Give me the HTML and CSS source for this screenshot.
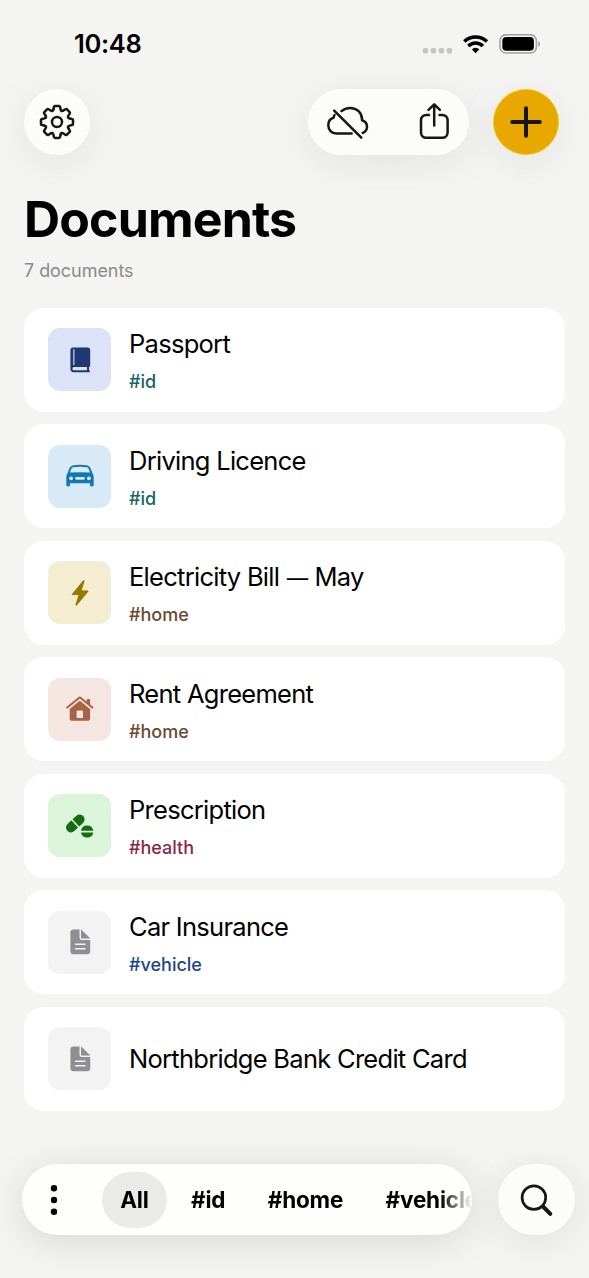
FILE: index.html
```html
<!DOCTYPE html>
<html lang="en">
<head>
<meta charset="utf-8">
<title>Documents</title>
<link rel="stylesheet" href="styles.css">
</head>
<body>
<div class="screen">
  <header class="status">
    <span class="time">10:48</span>
    <svg class="status-icons" width="120" height="24" viewBox="0 0 120 24">
      <g fill="#c4c4c3"><rect x="2.700" y="14" width="5.400" height="5.400" rx="1.700"/><rect x="10.700" y="14" width="5.400" height="5.400" rx="1.700"/><rect x="18.700" y="14" width="5.400" height="5.400" rx="1.700"/><rect x="26.700" y="14" width="5.400" height="5.400" rx="1.700"/></g>
      <g fill="none" stroke="#000" stroke-width="3.500"><path d="M44.300 7.500a16.200 16.200 0 0 1 22.600 0"/><path d="M48.300 12.100a10.300 10.300 0 0 1 14.600 0"/></g>
      <path d="M51.900 15.300a5.300 5.300 0 0 1 7.400 0L55.600 19.200z"/>
      <rect x="80" y="0.700" width="36.400" height="18.400" rx="6" fill="none" stroke="#a1a1a0" stroke-width="1.500"/>
      <rect x="82.300" y="3" width="31.600" height="13.800" rx="4"/>
      <path d="M118.200 7.400c2.900 1 2.900 4.300 0 5.300z" fill="#a1a1a0"/>
    </svg>
  </header>

  <nav class="toolbar">
    <button class="glass round" aria-label="Settings">
      <svg width="36" height="36" viewBox="-18 -18 36 36" fill="none" stroke="#161616" stroke-width="2.500" stroke-linecap="round">
        <defs><path id="tooth" d="M-3.600-12.600L-3.100-14.900Q-2.900-16-1.900-16H1.900Q2.900-16 3.100-14.900L3.600-12.600Q4.160-10 6.360-11.460"/></defs>
        <use href="#tooth"/><use href="#tooth" transform="rotate(45)"/><use href="#tooth" transform="rotate(90)"/><use href="#tooth" transform="rotate(135)"/><use href="#tooth" transform="rotate(180)"/><use href="#tooth" transform="rotate(225)"/><use href="#tooth" transform="rotate(270)"/><use href="#tooth" transform="rotate(315)"/>
        <circle r="5"/>
      </svg>
    </button>
    <div class="glass pair">
      <svg width="44" height="40" viewBox="325 102 44 40" fill="none" stroke="#161616" stroke-width="2.500" stroke-linecap="round" stroke-linejoin="round">
        <path d="M334.500 115.100C333.900 116 333.700 116.700 333.600 117.700C330.500 118.500 328.300 121.500 328.300 125.300C328.300 130 331.600 133.600 336.200 133.600H351.700"/>
        <path d="M341.500 111.100C344 108.900 346.400 107.900 350.100 107.900C356.900 107.900 362 112.900 362 119.200V120.300C365.200 121.300 367 123.700 367 126.800C367 129.600 365.300 132 362.700 132.900"/>
        <path d="M334.200 110.600L361.300 137.700"/>
      </svg>
      <svg width="32" height="40" viewBox="418 102 32 40" fill="none" stroke="#161616" stroke-width="2.500" stroke-linecap="round" stroke-linejoin="round">
        <path d="M429 114.900H426.200A5.200 5.200 0 0 0 421 120.100V132.600A5.200 5.200 0 0 0 426.200 137.800H442.400A5.200 5.200 0 0 0 447.600 132.600V120.100A5.200 5.200 0 0 0 442.400 114.900H439.500"/>
        <path d="M434.200 125.500V104.500M428.500 109.900L434.200 104.300L439.900 109.900"/>
      </svg>
    </div>
    <button class="round add" aria-label="Add document">
      <svg width="34" height="34" viewBox="0 0 34 34"><path d="M17 3.200V30.800M3.200 17H30.800" stroke="#161616" stroke-width="4" stroke-linecap="round"/></svg>
    </button>
  </nav>

  <main class="content">
    <h1 class="heading">Documents</h1>
    <p class="count">7 documents</p>
    <ul class="list">
      <li class="card">
        <span class="tile tile-passport"><svg width="30" height="30" viewBox="0 0 30 30">
          <path fill="#1d3872" d="M8.300 2.500H22.400A2.800 2.800 0 0 1 25.200 5.300V20.600Q25.200 21.900 24 22.300V25.300A1 1 0 0 1 24 27.300H8.900A3.500 3.500 0 0 1 5.400 23.800V5.300A2.800 2.800 0 0 1 8.300 2.500z"/>
          <path fill="#dde3f6" d="M8.300 4.200H9.400V19.900H8.300zM9 22.100H22V25.200H9A1.550 1.550 0 0 1 9 22.100z"/>
        </svg></span>
        <div class="info"><span class="name">Passport</span><span class="tag tag-id">#id</span></div>
      </li>
      <li class="card">
        <span class="tile tile-car"><svg width="30" height="30" viewBox="0 0 30 30">
          <path fill="#1377b6" fill-rule="evenodd" d="M8.500 4.200Q15 3.300 21.500 4.200Q24.600 4.500 25.700 7.400L27.400 12.100Q28.700 13.700 28.700 16.500V24Q28.700 25.600 26.900 25.600Q25 25.600 25 24V22.200H5V24Q5 25.600 3.100 25.600Q1.300 25.600 1.300 24V16.500Q1.300 13.700 2.600 12.100L4.300 7.400Q5.400 4.500 8.500 4.200zM8.300 6.200Q7 6.300 6.500 7.500L4.900 11.600Q15 10.800 25.100 11.600L23.500 7.500Q23 6.300 21.700 6.200Q15 5.500 8.300 6.200z"/>
          <g fill="#d8eaf6"><circle cx="6.100" cy="17.300" r="1.900"/><circle cx="23.900" cy="17.300" r="1.900"/><rect x="10.100" y="15.900" width="9.800" height="2.900" rx="1.450"/></g>
        </svg></span>
        <div class="info"><span class="name">Driving Licence</span><span class="tag tag-id">#id</span></div>
      </li>
      <li class="card">
        <span class="tile tile-bolt"><svg width="30" height="30" viewBox="0 0 30 30">
          <path fill="#967900" stroke="#967900" stroke-width="1" stroke-linejoin="round" d="M18.500 2.600L7.100 16.600H14.100L10.900 26.900Q11 27.500 11.700 27L22.900 13.400Q23.100 12.900 22.400 12.900H16.100L19.100 3Q19.100 2.300 18.500 2.600z"/>
        </svg></span>
        <div class="info"><span class="name">Electricity Bill <span class="dash">—</span> May</span><span class="tag tag-home">#home</span></div>
      </li>
      <li class="card">
        <span class="tile tile-house"><svg width="30" height="30" viewBox="0 0 30 30">
          <path fill="#a96246" fill-rule="evenodd" d="M4.700 13L14.800 5.500L25.100 13V24.200Q25.100 26.800 22.500 26.800H7.300Q4.700 26.800 4.700 24.200zM11.600 17.200V24H18V17.200Q18 16.500 17.300 16.500H12.300Q11.600 16.500 11.600 17.200z"/>
          <path fill="none" stroke="#f5e6e1" stroke-width="4.600" d="M1 14.900L14.800 3.700L28.600 14.900"/>
          <path fill="none" stroke="#a96246" stroke-width="2" stroke-linecap="round" stroke-linejoin="round" d="M2.200 13.500L13.900 3.900Q14.800 3.200 15.700 3.900L27.400 13.500"/>
          <path fill="#a96246" d="M21.700 5.800Q21.700 5 22.500 5H24.300Q25.100 5 25.100 5.800V11.200L21.700 8.600z"/>
        </svg></span>
        <div class="info"><span class="name">Rent Agreement</span><span class="tag tag-home">#home</span></div>
      </li>
      <li class="card">
        <span class="tile tile-pills"><svg width="30" height="30" viewBox="0 0 30 30">
          <g transform="translate(10.300 12.400) rotate(-43)" fill="#176b12"><path d="M-.8-4.900V4.900H-6A4.900 4.900 0 0 1-6-4.900zM.8-4.900V4.900H6A4.900 4.900 0 0 0 6-4.900z"/></g>
          <path fill="#176b12" d="M16 19.700A6.250 6.250 0 0 1 28.300 19.700zM16 21.400H28.300A6.250 6.250 0 0 1 16 21.400z"/>
        </svg></span>
        <div class="info"><span class="name">Prescription</span><span class="tag tag-health">#health</span></div>
      </li>
      <li class="card">
        <span class="tile tile-file"><svg width="30" height="30" viewBox="0 0 30 30">
          <path id="page" fill="#8e8e93" d="M8.500 2.500H14.500V10.800Q14.500 13 16.700 13H25.200V24.200A3 3 0 0 1 22.200 27.200H8.400A3 3 0 0 1 5.400 24.200V5.500A3 3 0 0 1 8.500 2.500zM16 2.600Q16.600 2.800 17.200 3.400L24.400 10.500Q25 11.100 25.100 11.600H17Q16 11.600 16 10.600z"/>
          <path stroke="#f3f3f4" stroke-width="1.500" stroke-linecap="round" d="M10.600 17.200H20M10.600 21.700H20"/>
        </svg></span>
        <div class="info"><span class="name">Car Insurance</span><span class="tag tag-vehicle">#vehicle</span></div>
      </li>
      <li class="card">
        <span class="tile tile-file"><svg width="30" height="30" viewBox="0 0 30 30">
          <use href="#page"/>
          <path stroke="#f3f3f4" stroke-width="1.500" stroke-linecap="round" d="M10.600 17.200H20M10.600 21.700H20"/>
        </svg></span>
        <div class="info"><span class="name">Northbridge Bank Credit Card</span></div>
      </li>
    </ul>
  </main>

  <footer class="bottom">
    <div class="filters">
      <svg class="dots" width="8" height="32" viewBox="0 0 8 32"><circle cx="4" cy="4.200" r="3.200"/><circle cx="4" cy="16" r="3.200"/><circle cx="4" cy="27.800" r="3.200"/></svg>
      <div class="chips">
        <span class="chip chip-active">All</span>
        <span class="chip">#id</span>
        <span class="chip">#home</span>
        <span class="chip">#vehicle</span>
      </div>
    </div>
    <button class="search" aria-label="Search">
      <svg width="36" height="36" viewBox="0 0 36 36" fill="none" stroke="#161616" stroke-linecap="round"><circle cx="14.900" cy="15.600" r="11.800" stroke-width="2.700"/><path d="M24 24.500L31.300 31.800" stroke-width="4"/></svg>
    </button>
  </footer>
</div>
</body>
</html>
```
FILE: styles.css
```css
* { box-sizing: border-box; }

body {
  margin: 0;
  background: #f4f4f2;
  color: #000;
  font-family: Inter, "Liberation Sans", sans-serif;
}

button { border: 0; padding: 0; font: inherit; }
svg { display: block; flex: none; }

.screen {
  width: 589px;
  height: 1278px;
  overflow: hidden;
  display: flex;
  flex-direction: column;
}

.status {
  height: 88.500px;
  flex: none;
  padding: 29px 49px 0 74px;
  display: flex;
  justify-content: space-between;
}
.time {
  font-size: 25.500px;
  font-weight: 600;
  line-height: 30px;
  letter-spacing: -0.300px;
}
.status-icons { margin-top: 5px; }

.toolbar {
  display: flex;
  align-items: center;
  padding: 0 30px 0 24px;
  height: 66px;
  flex: none;
}
.glass {
  background: #fcfcfa;
  box-shadow: 0 8px 44px rgba(0, 0, 0, 0.075);
}
.round {
  width: 66px;
  height: 66px;
  border-radius: 50%;
  display: grid;
  place-items: center;
}
.pair {
  width: 161.500px;
  height: 66px;
  border-radius: 33px;
  margin: 0 24px 0 auto;
  padding: 0 19.500px 0 17.500px;
  display: flex;
  align-items: center;
  justify-content: space-between;
}
.add {
  background: #e9a800;
  border: 1.500px solid #efcb08;
  box-shadow: 0 8px 44px rgba(0, 0, 0, 0.075);
}

.content { padding: 34.500px 24px 0; }
.heading {
  margin: 0;
  font-size: 50px;
  font-weight: 700;
  line-height: 60px;
  letter-spacing: -0.850px;
}
.count {
  margin: 10px 0 0;
  font-size: 18px;
  line-height: 24px;
  letter-spacing: -0.050px;
  color: #8a8a8c;
}

.list {
  list-style: none;
  margin: 24.500px 0 0;
  padding: 0;
  display: grid;
  gap: 12.500px;
}
.card {
  height: 104px;
  border-radius: 20px;
  background: #fff;
  padding: 0.800px 0 0 24px;
  display: flex;
  align-items: center;
  gap: 18px;
}
.tile {
  width: 63px;
  height: 63px;
  border-radius: 12px;
  display: grid;
  place-items: center;
}
.tile-passport { background: #dde3f6; }
.tile-car { background: #d8eaf6; }
.tile-bolt { background: #f5edd1; }
.tile-house { background: #f5e6e1; }
.tile-pills { background: #daf5d9; }
.tile-file { background: #f3f3f4; }

.info { display: flex; flex-direction: column; }
.info:has(.tag) { padding-top: 1.400px; }
.name {
  font-size: 25.500px;
  line-height: 42px;
  letter-spacing: -0.720px;
}
.dash {
  font-size: 21.500px;
  line-height: 1;
  margin: 0 0.500px 0 1px;
}
.tag {
  font-size: 18px;
  font-weight: 500;
  line-height: 33px;
}
.tag-id { color: #14656a; }
.tag-home { color: #6b4a2e; }
.tag-health { color: #8b2749; }
.tag-vehicle { color: #1c4788; }

.bottom {
  margin-top: auto;
  height: 114px;
  flex: none;
  padding: 0 14px 43px 22px;
  display: flex;
  justify-content: space-between;
}
.filters {
  width: 450px;
  height: 71px;
  border-radius: 36px;
  overflow: hidden;
  display: flex;
  align-items: center;
  padding-left: 28px;
  gap: 44px;
  background: #fefefc;
  box-shadow: 0 6px 40px rgba(0, 0, 0, 0.120);
}
.chips {
  flex: 1;
  min-width: 0;
  overflow: hidden;
  display: flex;
  gap: 6px;
  mask-image: linear-gradient(to right, #000 calc(100% - 31px), transparent);
}
.chip {
  flex: none;
  height: 56px;
  padding: 0 18.200px;
  border-radius: 28px;
  font-size: 22.500px;
  font-weight: 650;
  line-height: 56px;
  letter-spacing: -0.180px;
}
.chip-active { background: #eaeae9; }
.search {
  width: 77px;
  height: 71px;
  border-radius: 36px;
  background: #fcfcfa;
  display: grid;
  place-items: center;
  box-shadow: 0 6px 40px rgba(0, 0, 0, 0.090);
}
```
